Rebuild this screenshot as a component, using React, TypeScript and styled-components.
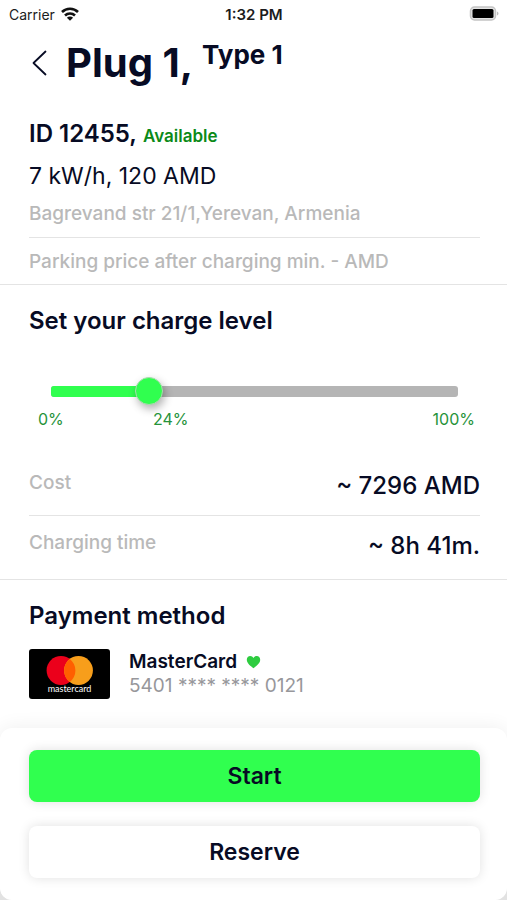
import React, { useState } from 'react';
import styled, { createGlobalStyle } from 'styled-components';

const colors = {
  ink: '#070b24',
  muted: '#b9b9b9',
  number: '#97979b',
  line: '#e4e4e4',
  green: '#30ff4f',
  available: '#0b8a17',
  scale: '#26933a',
  track: '#b5b5b5',
};

const GlobalStyle = createGlobalStyle`
  * {
    box-sizing: border-box;
  }

  body {
    margin: 0;
    background: #e2e2e2;
    color: ${colors.ink};
    font-family: Inter, 'Liberation Sans', sans-serif;
  }

  h1, h2, p, dl, dd {
    margin: 0;
  }
`;

const Screen = styled.main`
  display: flex;
  flex-direction: column;
  min-height: 100vh;
  background: #fff;
  border-radius: 0 0 12px 12px;
  overflow: hidden;
`;

const StatusBar = styled.div`
  display: grid;
  grid-template-columns: 1fr auto 1fr;
  align-items: center;
  height: 28px;
  padding: 0 8px 0 9px;
  color: #1c1c1c;
  font-size: 14px;
`;

const Carrier = styled.span`
  display: flex;
  align-items: center;
  gap: 6px;
`;

const Clock = styled.time`
  font-size: 15px;
  font-weight: 600;
`;

const BatteryIcon = styled.svg`
  justify-self: end;
`;

const Header = styled.header`
  display: flex;
  align-items: center;
  gap: 16px;
  height: 70px;
  padding: 0 28px;
`;

const BackButton = styled.button`
  display: flex;
  padding: 0 2px;
  border: 0;
  background: none;
  color: ${colors.ink};
  cursor: pointer;
`;

const Title = styled.h1`
  display: flex;
  align-items: flex-start;
  gap: 9px;
  font-size: 40px;
  font-weight: 700;
  line-height: 48px;
`;

const PlugType = styled.span`
  font-size: 26px;
  line-height: 32px;
`;

const Section = styled.section<{ $last?: boolean }>`
  padding: 20px 27px 0 29px;
  border-bottom: ${p => (p.$last ? '0' : `1px solid ${colors.line}`)};
`;

const StationId = styled.h2`
  display: flex;
  align-items: baseline;
  gap: 6px;
  font-size: 24px;
  font-weight: 600;
  line-height: 32px;
`;

const Availability = styled.span`
  color: ${colors.available};
  font-size: 17px;
`;

const Rate = styled.p`
  margin-top: 8px;
  font-size: 23px;
  line-height: 32px;
`;

const Note = styled.p<{ $divided?: boolean }>`
  padding: 10px 0 11px;
  border-bottom: ${p => (p.$divided ? `1px solid ${colors.line}` : '0')};
  color: ${colors.muted};
  font-size: 19px;
  font-weight: 500;
  line-height: 24px;
`;

const ParkingNote = styled(Note)`
  padding: 12px 0 10px;
`;

const SectionTitle = styled.h2`
  font-size: 24px;
  font-weight: 600;
  line-height: 32px;
`;

const Slider = styled.div`
  display: grid;
  align-items: center;
  margin: 38px 8px 0;

  > * {
    grid-area: 1 / 1;
  }
`;

const Track = styled.div`
  height: 11px;
  margin: 0 14px;
  border-radius: 3px;
  background: ${colors.track};
  overflow: hidden;
`;

const Fill = styled.div`
  height: 100%;
  background: ${colors.green};
`;

const Range = styled.input`
  appearance: none;
  width: 100%;
  height: 32px;
  margin: 0;
  background: none;
  cursor: pointer;

  &::-webkit-slider-thumb {
    appearance: none;
    width: 28px;
    height: 28px;
    border: 1px solid #a9dcae;
    border-radius: 50%;
    background: ${colors.green};
    box-shadow: 2px 4px 8px rgba(0, 0, 0, 0.3);
  }
`;

const Scale = styled.div`
  display: grid;
  align-items: center;
  padding: 2px 5px 0 9px;
  color: ${colors.scale};
  font-size: 16px;
  line-height: 20px;
`;

const ScaleMark = styled.span<{ $offset?: boolean }>`
  padding-left: ${p => (p.$offset ? '10px' : '0')};

  &:last-child {
    text-align: right;
  }
`;

const Estimates = styled.dl`
  margin-top: 27px;
`;

const Estimate = styled.div`
  display: flex;
  align-items: flex-start;
  justify-content: space-between;
  height: 59px;
  padding-top: 13px;

  & + & {
    height: 64px;
    border-top: 1px solid ${colors.line};
  }
`;

const EstimateLabel = styled.dt`
  color: ${colors.muted};
  font-size: 19px;
  font-weight: 500;
  line-height: 28px;
`;

const EstimateValue = styled.dd`
  font-size: 24px;
  font-weight: 500;
  line-height: 34px;
`;

const Payment = styled.div`
  display: flex;
  align-items: center;
  gap: 19px;
  margin: 17px 0 28px;
`;

const CardLogo = styled.svg`
  flex: none;
`;

const CardName = styled.p`
  display: flex;
  align-items: center;
  gap: 9px;
  font-size: 19px;
  font-weight: 600;
  line-height: 24px;
`;

const CardNumber = styled.p`
  color: ${colors.number};
  font-size: 19px;
  line-height: 24px;
`;

const Footer = styled.footer`
  display: flex;
  flex-direction: column;
  gap: 24px;
  margin-top: auto;
  padding: 22px 27px 22px 29px;
  border-radius: 12px;
  background: #fff;
  box-shadow: 0 0 20px rgba(0, 0, 0, 0.07);
`;

const Button = styled.button<{ $primary?: boolean }>`
  height: 52px;
  border: 0;
  border-radius: 8px;
  background: ${p => (p.$primary ? colors.green : '#fff')};
  box-shadow: 0 0 12px rgba(0, 0, 0, 0.12);
  color: ${colors.ink};
  font-family: inherit;
  font-size: 23px;
  font-weight: 600;
  cursor: pointer;
`;

const App = () => {
  const [level, setLevel] = useState(24);

  return (
    <>
      <GlobalStyle />
      <Screen>
        <StatusBar>
          <Carrier>
            Carrier
            <svg width="18" height="14" viewBox="0 0 18 14" aria-hidden="true">
              <g fill="none" stroke="#111" strokeWidth="2.6">
                <path d="M1 5a11.4 11.4 0 0 1 16 0" />
                <path d="M4 8.500a7.200 7.200 0 0 1 10 0" />
              </g>
              <path d="M9 13.800 5.900 10.700a4.400 4.400 0 0 1 6.200 0z" fill="#111" />
            </svg>
          </Carrier>
          <Clock>1:32 PM</Clock>
          <BatteryIcon width="31" height="16" viewBox="0 0 31 16" aria-hidden="true">
            <rect x="2.500" y="1" width="25" height="13" rx="4" fill="#e4e4e4" stroke="#c4c4c4" strokeWidth="1.500" />
            <rect x="4.500" y="3" width="21" height="9" rx="1.500" fill="#000" />
            <path d="M29 5.500c2 .8 2 3.200 0 4z" fill="#bdbdbd" />
          </BatteryIcon>
        </StatusBar>

        <Header>
          <BackButton type="button" aria-label="Back">
            <svg width="18" height="28" viewBox="0 0 18 28" aria-hidden="true">
              <path
                d="M15.500 2.500 3.500 14l12 11.500"
                fill="none"
                stroke="currentColor"
                strokeWidth="1.800"
                strokeLinecap="round"
                strokeLinejoin="round"
              />
            </svg>
          </BackButton>
          <Title>
            Plug 1,
            <PlugType>Type 1</PlugType>
          </Title>
        </Header>

        <Section>
          <StationId>
            ID 12455,
            <Availability>Available</Availability>
          </StationId>
          <Rate>7 kW/h, 120 AMD</Rate>
          <Note $divided>Bagrevand str 21/1,Yerevan, Armenia</Note>
          <ParkingNote>Parking price after charging min. - AMD</ParkingNote>
        </Section>

        <Section>
          <SectionTitle id="level-title">Set your charge level</SectionTitle>
          <Slider>
            <Track>
              <Fill style={{ width: `${level}%` }} />
            </Track>
            <Range
              type="range"
              min={0}
              max={100}
              value={level}
              aria-labelledby="level-title"
              onChange={e => setLevel(Number(e.target.value))}
            />
          </Slider>
          <Scale style={{ gridTemplateColumns: `${level}% auto auto` }}>
            <ScaleMark>0%</ScaleMark>
            <ScaleMark $offset>{level}%</ScaleMark>
            <ScaleMark>100%</ScaleMark>
          </Scale>
          <Estimates>
            <Estimate>
              <EstimateLabel>Cost</EstimateLabel>
              <EstimateValue>~ 7296 AMD</EstimateValue>
            </Estimate>
            <Estimate>
              <EstimateLabel>Charging time</EstimateLabel>
              <EstimateValue>~ 8h 41m.</EstimateValue>
            </Estimate>
          </Estimates>
        </Section>

        <Section $last>
          <SectionTitle>Payment method</SectionTitle>
          <Payment>
            <CardLogo width="81" height="50" viewBox="0 0 81 50" role="img" aria-label="Mastercard">
              <rect width="81" height="50" rx="3" fill="#000" />
              <circle cx="32" cy="21.500" r="14.400" fill="#eb001b" />
              <circle cx="49.500" cy="21.500" r="14.400" fill="#f79e1b" />
              <path d="M40.750 10.060a14.400 14.400 0 0 1 0 22.880a14.400 14.400 0 0 1 0-22.880z" fill="#ff5f00" />
              <text x="40.500" y="42.500" fill="#fff" fontFamily="Lato, sans-serif" fontSize="9" textAnchor="middle">
                mastercard
              </text>
            </CardLogo>
            <div>
              <CardName>
                MasterCard
                <svg width="15" height="14" viewBox="0 0 15 14" aria-hidden="true">
                  <path
                    d="M7.500 13.200C5 11.300.8 8.500.8 4.800.8 2.600 2.300 1 4.200 1c1.400 0 2.600.8 3.300 2C8.200 1.800 9.400 1 10.800 1c1.900 0 3.400 1.600 3.400 3.800 0 3.700-4.200 6.500-6.700 8.400z"
                    fill="#2ecc40"
                  />
                </svg>
              </CardName>
              <CardNumber>5401 **** **** 0121</CardNumber>
            </div>
          </Payment>
        </Section>

        <Footer>
          <Button type="button" $primary>
            Start
          </Button>
          <Button type="button">Reserve</Button>
        </Footer>
      </Screen>
    </>
  );
};

export default App;
